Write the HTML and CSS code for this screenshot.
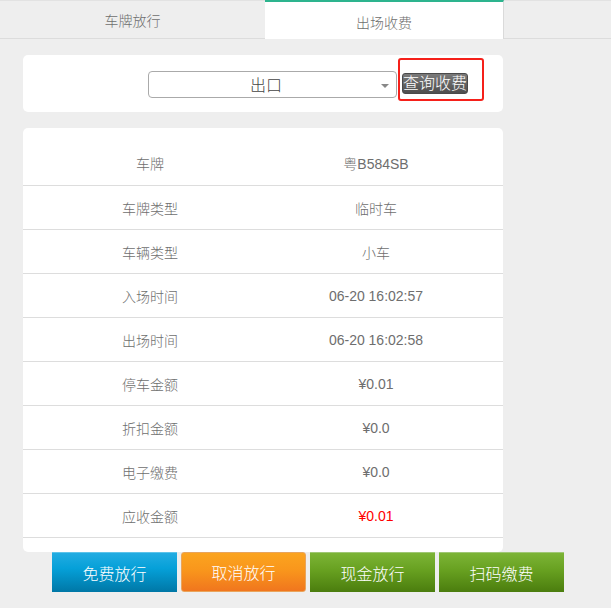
FILE: index.html
```html
<!DOCTYPE html>
<html lang="zh-CN">
<head>
<meta charset="utf-8">
<title>出场收费</title>
<link rel="stylesheet" href="styles.css">
</head>
<body>
<div class="tabs">
  <div class="tab">车牌放行</div>
  <div class="tab active">出场收费</div>
</div>
<div class="card query">
  <div class="select"><span class="select-text">出口</span><span class="arrow"></span></div>
  <button class="query-btn">查询收费</button>
  <div class="highlight"></div>
</div>
<div class="card info">
  <div class="row"><span>车牌</span><span>粤B584SB</span></div>
  <div class="row"><span>车牌类型</span><span>临时车</span></div>
  <div class="row"><span>车辆类型</span><span>小车</span></div>
  <div class="row"><span>入场时间</span><span>06-20 16:02:57</span></div>
  <div class="row"><span>出场时间</span><span>06-20 16:02:58</span></div>
  <div class="row"><span>停车金额</span><span>¥0.01</span></div>
  <div class="row"><span>折扣金额</span><span>¥0.0</span></div>
  <div class="row"><span>电子缴费</span><span>¥0.0</span></div>
  <div class="row"><span>应收金额</span><span class="due">¥0.01</span></div>
</div>
<div class="actions">
  <button class="act blue">免费放行</button>
  <button class="act orange">取消放行</button>
  <button class="act green">现金放行</button>
  <button class="act green">扫码缴费</button>
</div>
</body>
</html>
```
FILE: styles.css
```css
html, body {
  margin: 0;
  padding: 0;
  background: #eeeeee;
  font-family: "Liberation Sans", "Noto Sans CJK SC", sans-serif;
  font-weight: 300;
  color: #666;
}
.tabs {
  display: flex;
  height: 37px;
  border-top: 1px solid #e2e2e2;
  border-bottom: 1px solid #dcdcdc;
}
.tab {
  width: 265px;
  display: flex;
  align-items: center;
  justify-content: center;
  font-size: 14px;
  color: #6e6e6e;
}
.tab.active {
  width: 239px;
  background: #fff;
  border-top: 2px solid #2db48e;
  border-right: 1px solid #dadada;
  margin-top: -1px;
  margin-bottom: -1px;
  box-sizing: border-box;
  height: 39px;
  padding-top: 2px;
}
.card {
  background: #fff;
  border-radius: 5px;
  margin-left: 23px;
  width: 480px;
}
.query {
  position: relative;
  margin-top: 16px;
  height: 57px;
  display: flex;
  align-items: center;
  padding-left: 125px;
  box-sizing: border-box;
  gap: 5px;
}
.select {
  position: relative;
  width: 249px;
  height: 27px;
  box-sizing: border-box;
  border: 1px solid #aaa;
  border-radius: 4px;
  display: flex;
  align-items: center;
  justify-content: center;
  padding-right: 13px;
  font-size: 16px;
  color: #444;
  margin-top: 1px;
}
.arrow {
  position: absolute;
  right: 7px;
  top: 12px;
  border-left: 4px solid transparent;
  border-right: 4px solid transparent;
  border-top: 4px solid #888;
}
.query-btn {
  height: 21px;
  width: 66px;
  padding: 0;
  border: 1px solid #4a4a4a;
  border-radius: 3px;
  background: linear-gradient(#7a7a7a, #4e4e4e);
  color: #fff;
  font-family: "Liberation Sans", "Noto Sans CJK SC", sans-serif;
  font-weight: 300;
  font-size: 16px;
  line-height: 19px;
  margin-top: -1px;
}
.highlight {
  position: absolute;
  left: 375px;
  top: 3px;
  width: 86px;
  height: 43px;
  box-sizing: border-box;
  border: 2px solid #f5201a;
  border-radius: 3px;
}
.info {
  margin-top: 16px;
  padding: 13px 0 14px;
}
.row {
  display: grid;
  grid-template-columns: 1fr 1fr;
  padding: 0 14px;
  height: 43px;
  align-items: center;
  border-bottom: 1px solid #dddddd;
  font-size: 14px;
  text-align: center;
  color: #6e6e6e;
}
.row:first-child {
  height: 44px;
}
.due {
  color: #ff0000;
}
.actions {
  display: flex;
  gap: 4px;
  margin-left: 52px;
}
.act {
  width: 125px;
  height: 40px;
  padding: 0;
  border: none;
  color: #fff;
  font-family: "Liberation Sans", "Noto Sans CJK SC", sans-serif;
  font-weight: 300;
  font-size: 16px;
  box-sizing: border-box;
}
.blue {
  background: linear-gradient(#22ace2, #05a0d8 40%, #0077a6);
  border-top: 1px solid #5cc3ea;
}
.orange {
  background: linear-gradient(#fba41f, #f9961c 45%, #f0761e);
  border: 1px solid #e9a45c;
  border-radius: 3px;
}
.green {
  background: linear-gradient(#7cb436, #67a020 45%, #4b7d0e);
  border-top: 1px solid #9fc774;
}
```
